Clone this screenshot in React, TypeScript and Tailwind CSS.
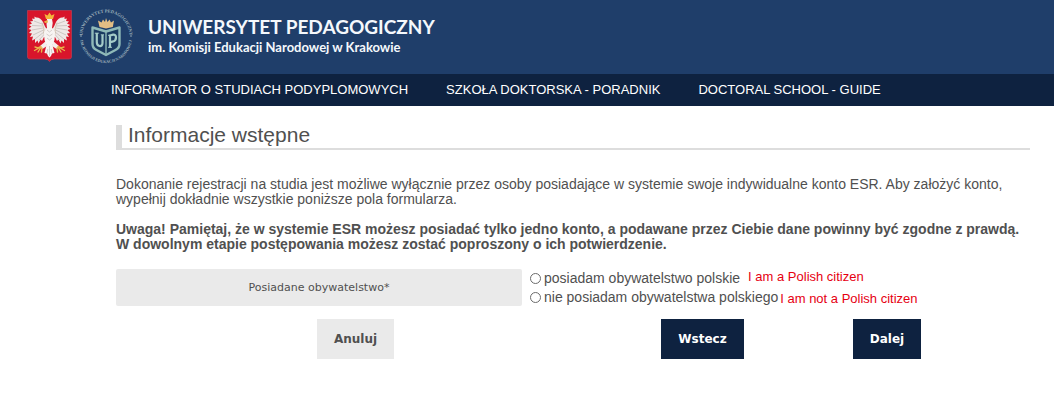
const navLinks = [
  'INFORMATOR O STUDIACH PODYPLOMOWYCH',
  'SZKOŁA DOKTORSKA - PORADNIK',
  'DOCTORAL SCHOOL - GUIDE',
];

const options = [
  { value: 'pl', label: 'posiadam obywatelstwo polskie', note: 'I am a Polish citizen', gap: 'ml-2', align: 'items-start' },
  { value: 'other', label: 'nie posiadam obywatelstwa polskiego', note: 'I am not a Polish citizen', gap: 'ml-[2px]', align: 'items-end' },
];

function WingHalf() {
  return (
    <g>
      <path
        d="M20.5 19 C18 18 17.500 15 16 12 C14.500 9 11.500 7 9 7.500 L7.500 6.500 L7.500 9 L5 8.500 L6 11 L3 11.500 L5 13.500 L1.800 15 L4.500 16.500 L1.500 19 L4.500 20 L2 23 L5 23.500 L3 27 L6 26.500 L5 30.500 L8 29 L8 33 L10.500 30.500 L11.500 33.500 L13.500 29.500 L15 31 L17 27 L20.500 28 Z"
        fill="#efe9e7"
      />
      <path
        d="M15 14 L7 11 M15.500 16 L5 15.500 M16 18 L5 20 M16.500 20 L6 25 M17 22 L8 29 M17.500 24 L12 30"
        stroke="#b5aeab"
        strokeWidth="0.6"
        fill="none"
      />
      <path d="M15 12.500 Q17.500 18 17 24" stroke="#c9b8a0" strokeWidth="0.8" fill="none" />
      <path d="M19 31 L13 36 L15.500 39 L20 36 Z" fill="#f3efed" />
      <path d="M14 36.500 L11 38 L8 37 M12 38 L7.500 40.500 M13.500 38 L11 42 M15 38 L14.500 42" stroke="#e8b54a" strokeWidth="1.4" fill="none" strokeLinecap="round" />
    </g>
  );
}

function Emblem() {
  return (
    <svg className="h-[52px] w-[45px] shrink-0" viewBox="0 0 45 52" role="img" aria-label="Godło Polski">
      <path d="M0.500 0.500 H44.500 V47 Q44.500 49 42 49 H27 Q24 49.200 22.500 51.500 Q21 49.200 18 49 H3 Q0.500 49 0.500 47 Z" fill="#d8152b" stroke="#b83a50" strokeWidth="0.8" />
      <WingHalf />
      <g transform="translate(45 0) scale(-1 1)">
        <WingHalf />
      </g>
      <path d="M20 10 Q19 14 20 18 L17 22 L17.500 30 L19.500 35 L17.500 43 L20 43.500 L21 46 L22.500 47.500 L24 46 L25 43.500 L27.500 43 L25.500 35 L27.500 30 L28 22 L25 18 Q26.500 13 25 9 Q23 7.500 20 9 Z" fill="#f7f4f2" />
      <path d="M20 20 L22.500 22 L25 20 M19.500 24 L22.500 26 L25.500 24 M20 28 L22.500 30 L25 28 M22.500 36 V46 M20.800 39 L20 43 M24.200 39 L25 43" stroke="#c4bcb9" strokeWidth="0.700" fill="none" />
      <path d="M20.500 10 L17 11.500 L18 13 L21 12.500 Z" fill="#e8b54a" />
      <path d="M19 9 L17.500 4 L20.500 5.500 L22.500 2.500 L24.500 5.500 L27.500 4 L26 9 Z" fill="#f4b63c" />
    </svg>
  );
}

function Seal() {
  return (
    <svg className="h-14 w-14 shrink-0" viewBox="0 0 56 56" role="img" aria-label="Uniwersytet Pedagogiczny">
      <defs>
        <path id="arc-top" d="M4.500 28 A23.500 23.500 0 0 1 51.500 28" />
        <path id="arc-bottom" d="M2 29 A26 26 0 0 0 54 29" />
      </defs>
      <g fill="#9fb4bd" fontFamily="Liberation Serif, serif" fontWeight="700" fontSize="4.500" textAnchor="middle">
        <text>
          <textPath href="#arc-top" startOffset="50%">UNIWERSYTET PEDAGOGICZNY</textPath>
        </text>
        <text fontSize="4">
          <textPath href="#arc-bottom" startOffset="50%">IM. KOMISJI EDUKACJI NARODOWEJ</textPath>
        </text>
      </g>
      <circle cx="3" cy="28" r="0.800" fill="#9fb4bd" />
      <circle cx="53" cy="28" r="0.800" fill="#9fb4bd" />
      <path d="M14.500 19.500 L28 23.500 L41.500 19.500 V36 Q41.500 40 37.500 42 L28 47 L18.500 42 Q14.500 40 14.500 36 Z" fill="#1b3b61" stroke="#8fb9b8" strokeWidth="2.400" strokeLinejoin="round" />
      <path d="M28 23 V46" stroke="#8fb9b8" strokeWidth="1.400" />
      <g fill="none" stroke="#a5cbc8" strokeWidth="2.200">
        <path d="M18.800 25 V34 Q18.800 37.500 21.500 38 Q24.500 38.300 24.500 35 V27" />
        <path d="M32 39.500 V27.500 L35 26.600 Q38 26.300 38 29.500 Q38 33 34.500 33.700 L32 34.200" />
      </g>
      <path d="M16.800 25.200 H20.800 M22.800 26.800 H26 M30 27.300 H32 M30 39.300 H34" stroke="#a5cbc8" strokeWidth="1" />
      <path d="M21.500 19 L20 12.500 L23.500 14.500 L25 11.500 L27 14 L28 10 L29.500 14 L31.500 11.500 L33 14.500 L36 12.500 L34.800 19 L28 20.500 Z" fill="#e3bd84" />
    </svg>
  );
}

export default function App() {
  return (
    <div className="min-h-screen bg-white font-['Liberation_Sans',Arial,sans-serif] text-sm leading-[15px] text-[#505050]">
      <header className="flex h-[74px] items-start bg-[#1f3e6a] pl-[27px] pt-2">
        <div className="flex items-start gap-[6px]">
          <div className="pt-[2px]">
            <Emblem />
          </div>
          <Seal />
        </div>
        <div className="ml-[14px] pt-[7px] font-['Lato',sans-serif] font-bold text-[#f4f8fc]">
          <p className="text-[19px] leading-6">UNIWERSYTET PEDAGOGICZNY</p>
          <p className="text-[13px] leading-4">im. Komisji Edukacji Narodowej w Krakowie</p>
        </div>
      </header>

      <nav className="flex h-8 items-center gap-[38px] bg-[#0e2240] pb-[2px] pl-[111px] text-[13px] text-white">
        {navLinks.map((link) => (
          <a key={link} href="#" className="whitespace-nowrap">
            {link}
          </a>
        ))}
      </nav>

      <main className="pl-[116px] pr-6 pt-[19px]">
        <h1 className="border-b-2 border-l-[6px] border-[#dddddd] pb-1 pl-[6px] text-[21px] leading-[19px]">
          Informacje wstępne
        </h1>

        <p className="mt-[27px]">
          Dokonanie rejestracji na studia jest możliwe wyłącznie przez osoby posiadające w systemie swoje indywidualne
          konto ESR. Aby założyć konto, wypełnij dokładnie wszystkie poniższe pola formularza.
        </p>
        <p className="mt-[15px] font-bold">
          Uwaga! Pamiętaj, że w systemie ESR możesz posiadać tylko jedno konto, a podawane przez Ciebie dane powinny
          być zgodne z prawdą. W dowolnym etapie postępowania możesz zostać poproszony o ich potwierdzenie.
        </p>

        <form className="mt-[17px]" onSubmit={(event) => event.preventDefault()}>
          <div className="grid grid-cols-[406fr_508fr]" role="radiogroup" aria-labelledby="citizenship">
            <div
              id="citizenship"
              className="flex items-center justify-center rounded-[2px] bg-[#eaeaea] font-['DejaVu_Sans',Verdana,sans-serif] text-[11px]"
            >
              Posiadane obywatelstwo*
            </div>
            <div className="pl-2">
              {options.map((option) => (
                <div key={option.value} className={`flex h-[18px] first:h-[19px] ${option.align}`}>
                  <label className="flex h-[18px] items-center gap-[3px] whitespace-nowrap">
                    <input
                      type="radio"
                      name="citizenship"
                      value={option.value}
                      className="size-[11px] appearance-none rounded-full border border-[#6b6b6b] bg-white checked:bg-[#0e2240]"
                    />
                    {option.label}
                  </label>
                  <span className={`whitespace-nowrap text-[13px] text-[#e60012] ${option.gap}`}>{option.note}</span>
                </div>
              ))}
            </div>
          </div>

          <div className="mt-[13px] grid grid-cols-[479fr_215fr_154fr_66fr] justify-items-center font-['DejaVu_Sans',Verdana,sans-serif] text-xs font-bold">
            <button type="button" className="h-10 bg-[#eaeaea] px-[17px]">
              Anuluj
            </button>
            <button type="button" className="h-10 bg-[#0e2240] px-[17px] text-white">
              Wstecz
            </button>
            <button type="submit" className="h-10 bg-[#0e2240] px-[17px] text-white">
              Dalej
            </button>
          </div>
        </form>
      </main>
    </div>
  );
}
